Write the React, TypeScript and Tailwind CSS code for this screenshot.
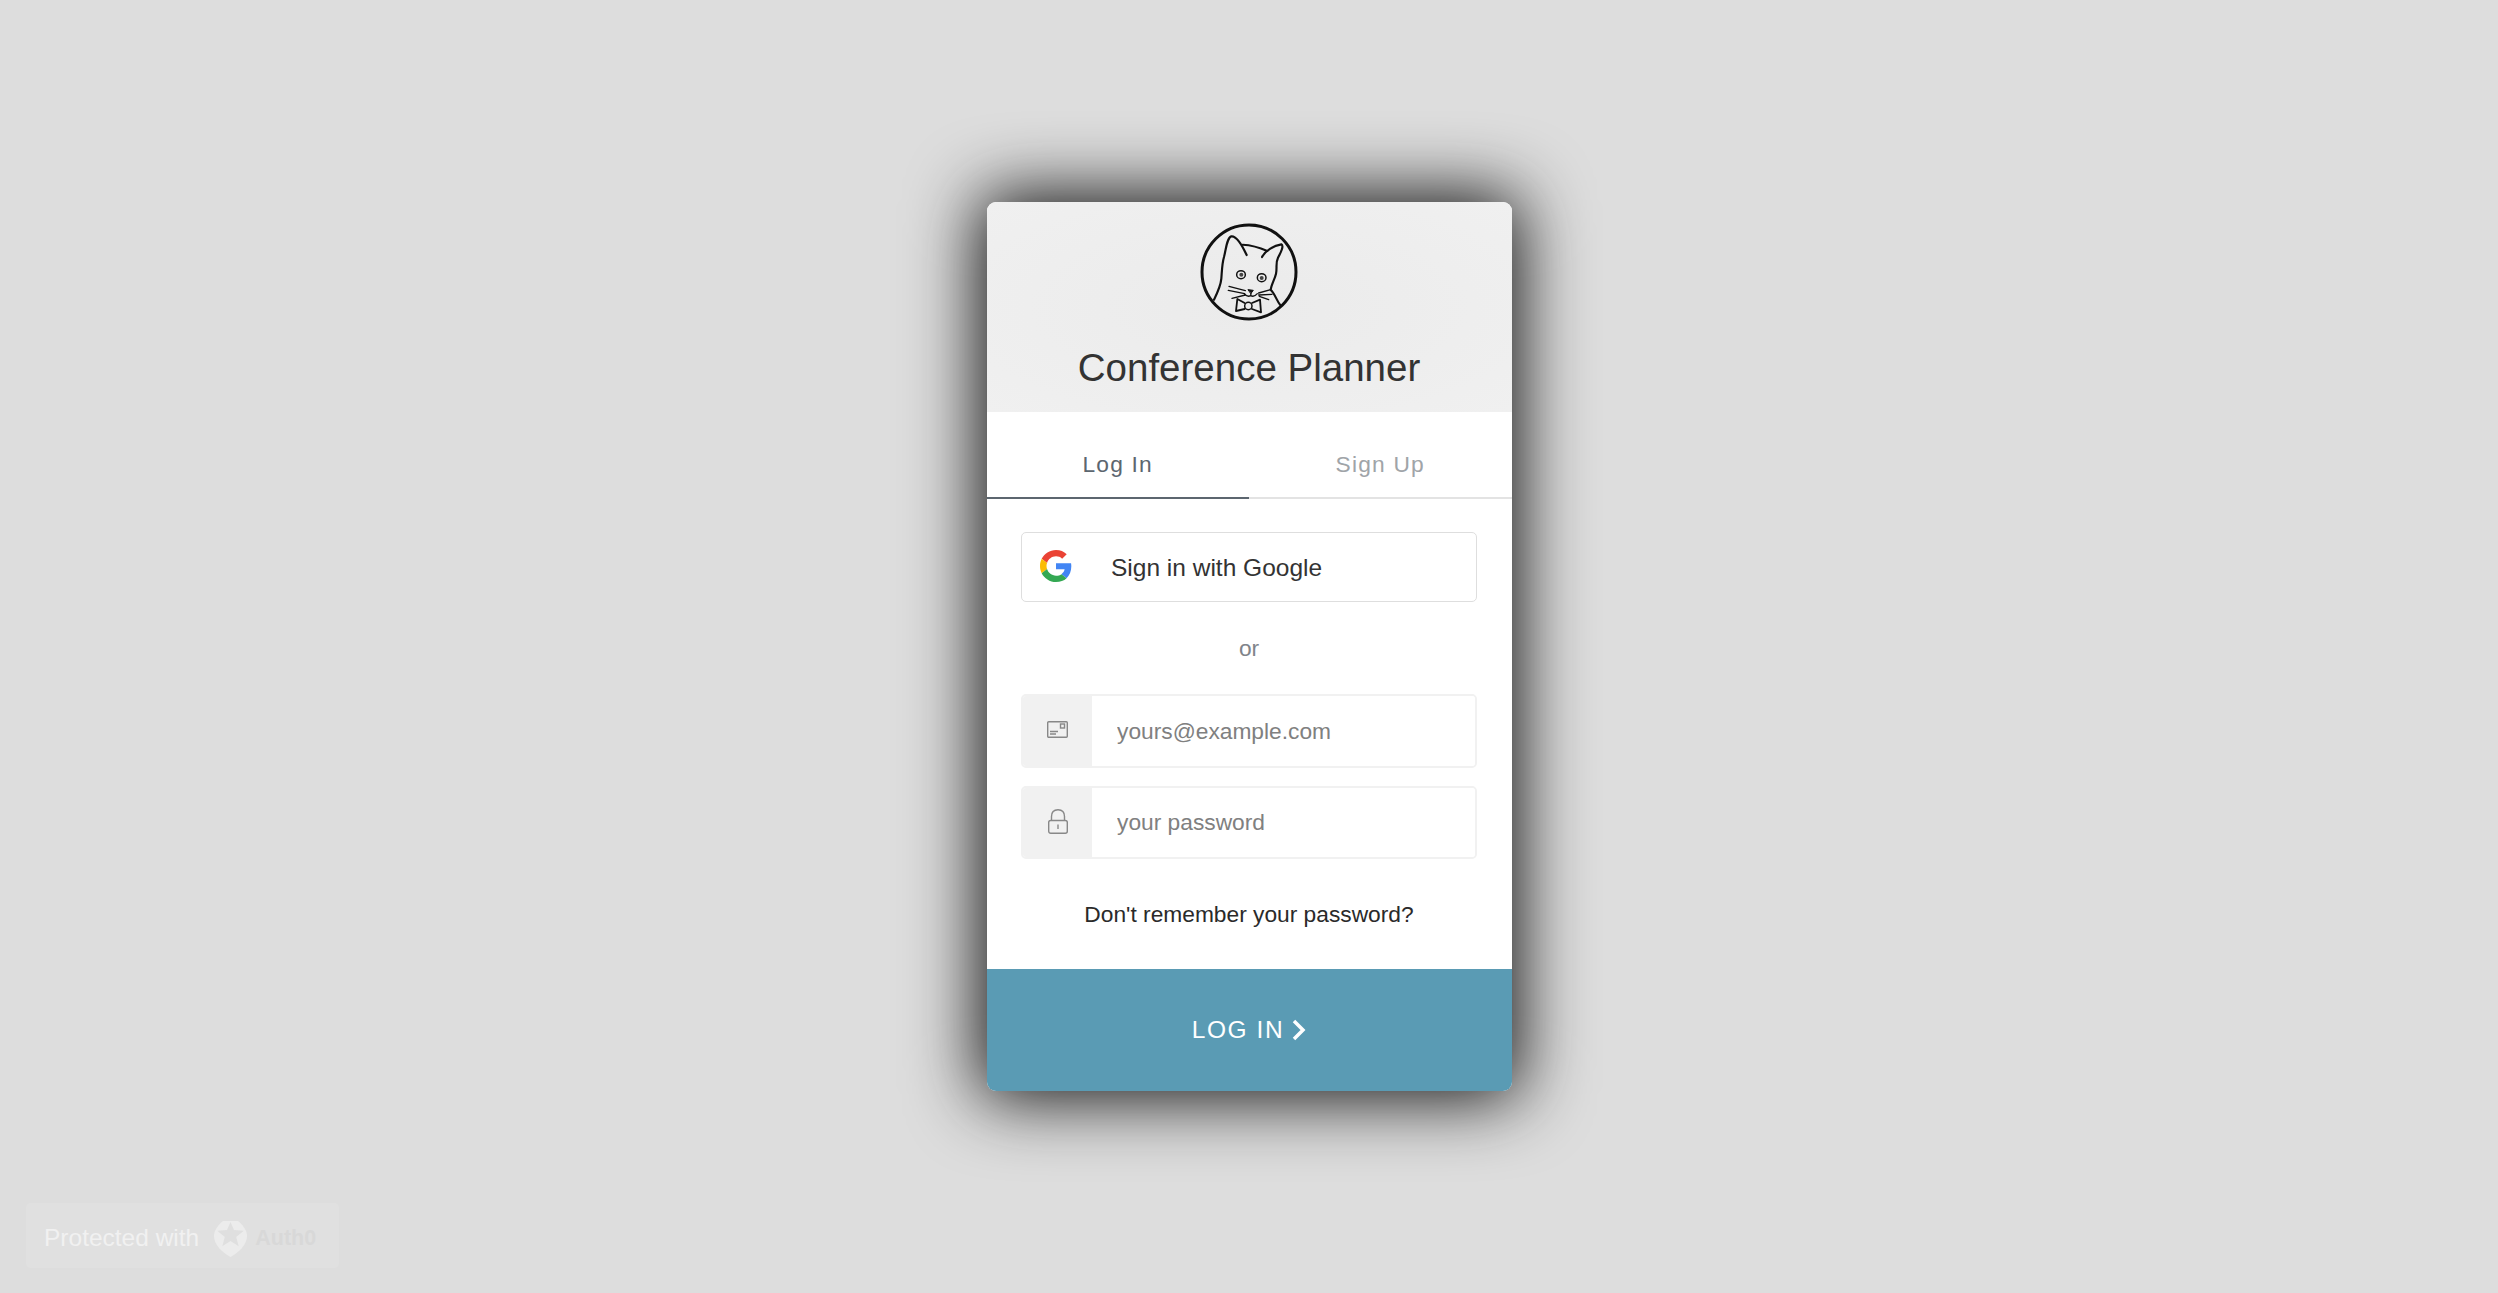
import React from 'react';

const CatLogo = () => (
  <svg width="110" height="110" viewBox="102 20 330 330" fill="none" stroke="#111" strokeLinecap="round" strokeLinejoin="round">
    <circle cx="267" cy="185" r="141" strokeWidth="9" />
    <path strokeWidth="6.500" d="M162 268C172 248 182 228 184 205C186 180 186 160 192 140C198 118 200 84 214 78C228 76 246 104 260 134" />
    <path strokeWidth="6" d="M248 103C270 104 300 112 322 122" />
    <path strokeWidth="6.500" d="M306 140C316 122 340 106 364 102C372 106 364 124 354 142C346 158 352 172 348 190C344 208 334 222 332 238C346 252 350 272 362 286" />
    <ellipse cx="243" cy="193" rx="13" ry="12" strokeWidth="4.500" />
    <ellipse cx="305" cy="202" rx="13" ry="12" strokeWidth="4.500" />
    <circle cx="244" cy="193" r="6" fill="#444" stroke="none" />
    <circle cx="305" cy="203" r="6" fill="#444" stroke="none" />
    <path fill="#111" strokeWidth="3" d="M265 238L280 240L273 249Z" />
    <path strokeWidth="4" d="M273 249L272 256M254 252C260 258 268 258 272 256C278 259 286 257 292 250" />
    <path strokeWidth="4" d="M207 228L256 241M205 240L254 250M216 264L256 254M296 248L332 238M296 254L336 252M298 258L326 268" />
    <path strokeWidth="5.500" d="M254 278L232 266L228 302L254 296M276 278L300 268L303 306L276 296" />
    <circle cx="265" cy="287" r="11" strokeWidth="4.500" />
  </svg>
);

const GoogleIcon = () => (
  <svg className="mb-[2px]" width="32" height="32" viewBox="0 0 48 48">
    <path fill="#EA4335" d="M24 9.5c3.54 0 6.71 1.22 9.21 3.6l6.85-6.85C35.9 2.38 30.47 0 24 0 14.62 0 6.51 5.38 2.56 13.22l7.98 6.19C12.43 13.72 17.74 9.5 24 9.5z" />
    <path fill="#4285F4" d="M46.98 24.55c0-1.57-.15-3.09-.38-4.55H24v9.02h12.94c-.58 2.96-2.26 5.48-4.78 7.18l7.73 6c4.51-4.18 7.09-10.36 7.09-17.65z" />
    <path fill="#FBBC05" d="M10.53 28.59c-.48-1.45-.76-2.99-.76-4.59s.27-3.14.76-4.59l-7.98-6.19C.92 16.46 0 20.12 0 24c0 3.88.92 7.54 2.56 10.78l7.97-6.19z" />
    <path fill="#34A853" d="M24 48c6.48 0 11.93-2.13 15.89-5.81l-7.73-6c-2.15 1.45-4.92 2.3-8.16 2.3-6.26 0-11.57-4.22-13.47-9.91l-7.98 6.19C6.51 42.62 14.62 48 24 48z" />
  </svg>
);

const MailIcon = () => (
  <svg width="21" height="17" viewBox="0 0 21 17" fill="none" stroke="#888" strokeWidth="1.400">
    <rect x="0.700" y="0.700" width="19.600" height="15.600" rx="1" />
    <rect x="13.500" y="3" width="4" height="4" />
    <path d="M3 10.500H11M3 13H9" />
  </svg>
);

const LockIcon = () => (
  <svg width="20" height="25" viewBox="0 0 20 25" fill="none" stroke="#888" strokeWidth="1.400">
    <rect x="0.700" y="11.500" width="18.600" height="12.800" rx="2" />
    <path d="M3.500 11.500V7.500C3.500 3.200 6 0.700 10 0.700C14 0.700 16.500 3.200 16.500 7.500V11.500" />
    <path d="M10 15.500V20" />
  </svg>
);

const Auth0Mark = () => (
  <svg width="33" height="36" viewBox="0 0 33 36">
    <path fill="#ececec" d="M9 0H24C28 3 33 9 33 15C33 24 24 32 16.500 36C9 32 0 24 0 15C0 9 5 3 9 0Z" />
    <path fill="#dfdfdf" d="M16.500 1L20 9.100L29.800 9.700L22.200 15.900L24.700 25.300L16.500 20L8.300 25.300L10.800 15.900L3.200 9.700L13 9.100Z" />
  </svg>
);

const InputRow = ({ icon, placeholder, type }: { icon: React.ReactNode; placeholder: string; type: string }) => (
  <div className="flex h-[73.500px] rounded-[5px] border-2 border-[#f1f1f1] overflow-hidden">
    <div className="w-[69px] shrink-0 flex items-center justify-center bg-[#f1f1f1] pb-[2px]">{icon}</div>
    <input
      type={type}
      placeholder={placeholder}
      className="flex-1 min-w-0 pl-[25px] text-[22.750px] text-[#333] bg-white outline-none placeholder:text-[#808080]"
    />
  </div>
);

const App = () => {
  return (
    <div className="relative h-screen flex items-center justify-center bg-[#dddddd] overflow-hidden font-['Liberation_Sans',Arial,sans-serif]">
      <div className="w-[525px] h-[889px] flex flex-col rounded-[9px] overflow-hidden bg-white shadow-[0_0_70px_7px_#111]">
        <div className="h-[210px] shrink-0 flex flex-col items-center bg-[radial-gradient(ellipse_at_center,#ebebeb,#f0f0f0)] pt-[15px]">
          <CatLogo />
          <h1 className="mt-[18px] text-[38.500px] leading-[46px] text-[#333]">Conference Planner</h1>
        </div>

        <div className="h-[87px] shrink-0 flex">
          <div className="flex-1 flex items-center justify-center pt-[19px] border-b-2 border-[#5c666f] text-[22.750px] tracking-[1.200px] text-[#5c666f]">Log In</div>
          <div className="flex-1 flex items-center justify-center pt-[19px] border-b-2 border-[#e3e3e3] text-[22.750px] tracking-[1.200px] text-[#a0a4a8]">Sign Up</div>
        </div>

        <div className="flex-1 flex flex-col px-[34.500px] pt-[33px]">
          <div className="h-[70px] flex items-center rounded-[5px] border border-[#dedede] pl-[18px]">
            <GoogleIcon />
            <span className="ml-[39px] pt-[3px] text-[24.500px] text-[#333]">Sign in with Google</span>
          </div>
          <div className="h-[92px] flex items-center justify-center text-[22.750px] text-[#80848a]">or</div>
          <div className="flex flex-col gap-[18px]">
            <InputRow icon={<MailIcon />} placeholder="yours@example.com" type="email" />
            <InputRow icon={<LockIcon />} placeholder="your password" type="password" />
          </div>
          <div className="mt-[37px] text-center text-[22.750px] leading-[36px] text-[#2a2a2a]">Don't remember your password?</div>
        </div>

        <button className="h-[122px] shrink-0 flex items-center justify-center gap-[8px] bg-[#5a9bb4] text-white text-[24.500px] tracking-[1.600px]">
          LOG IN
          <svg width="14" height="22" viewBox="0 0 14 22" fill="none" stroke="#fff" strokeWidth="3.500">
            <path d="M2 2L11 11L2 20" />
          </svg>
        </button>
      </div>

      <div className="absolute left-[26px] bottom-[25px] w-[313px] h-[65px] flex items-center rounded-[5px] bg-white/10 pl-[18px] pt-[6px]">
        <span className="text-[24.500px] text-[#f1f1f1]">Protected with</span>
        <span className="ml-[15px]"><Auth0Mark /></span>
        <span className="ml-[8px] text-[21.500px] font-bold text-[#d8d8d8]">Auth0</span>
      </div>
    </div>
  );
};

export default App;
